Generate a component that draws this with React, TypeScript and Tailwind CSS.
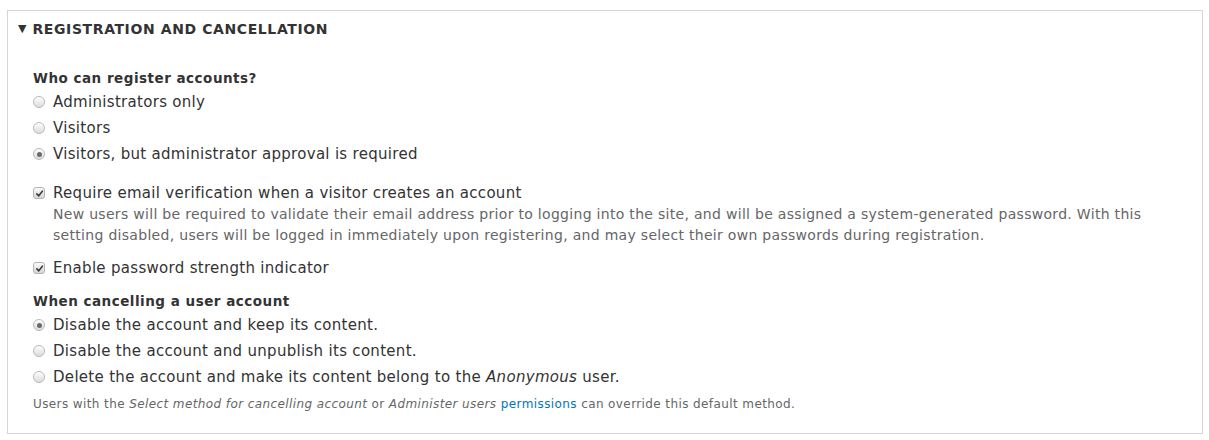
import React from 'react';

function Radio({ checked = false }: { checked?: boolean }) {
  return (
    <span className="flex h-[12px] w-[12px] shrink-0 items-center justify-center rounded-full border border-[#b9b9b9] bg-gradient-to-b from-[#fdfdfd] to-[#dcdcdc] shadow-[inset_0_1px_1px_rgba(255,255,255,0.8)]">
      {checked && <span className="h-[5px] w-[5px] rounded-full bg-[#6a6a6a]" />}
    </span>
  );
}

function Checkbox() {
  return (
    <span className="flex h-[12px] w-[12px] shrink-0 items-center justify-center rounded-[3px] border border-[#b3b3b3] bg-gradient-to-b from-[#fafafa] to-[#d6d6d6]">
      <svg width="9" height="9" viewBox="0 0 10 10">
        <path d="M2 5.4 L4.2 7.6 L8.2 2.4" fill="none" stroke="#3a3a3a" strokeWidth="1.7" strokeLinecap="round" strokeLinejoin="round" />
      </svg>
    </span>
  );
}

function Option({ children, kind, checked }: { children: React.ReactNode; kind: 'radio' | 'check'; checked?: boolean }) {
  return (
    <div className="flex h-[26px] items-center gap-[8px] text-[15px] tracking-[0.3px] text-[#333]">
      {kind === 'radio' ? <Radio checked={checked} /> : <Checkbox />}
      <span>{children}</span>
    </div>
  );
}

export default function App() {
  return (
    <div className="h-[440px] w-[1209px] bg-white pl-[7px] pt-[10px] font-['DejaVu_Sans',sans-serif]">
      <div className="h-[424px] w-[1196px] border border-[#d6d6d6]">
        <div className="flex h-[36px] items-center pl-[10px] font-bold text-[#333]">
          <span className="mr-[6px] text-[11px]">▼</span>
          <span className="text-[14px] tracking-[0.6px]">REGISTRATION AND CANCELLATION</span>
        </div>
        <div className="pl-[25px]">
          <div className="mt-[20px] flex h-[22px] items-center text-[13.5px] font-bold tracking-[0.5px] text-[#333]">Who can register accounts?</div>
          <Option kind="radio">Administrators only</Option>
          <Option kind="radio">Visitors</Option>
          <Option kind="radio" checked>Visitors, but administrator approval is required</Option>

          <div className="mt-[13px]">
            <Option kind="check">Require email verification when a visitor creates an account</Option>
          </div>
          <p className="-mt-[2px] pl-[20px] text-[14px] leading-[21px] tracking-[0.3px] text-[#666]">
            New users will be required to validate their email address prior to logging into the site, and will be assigned a system-generated password. With this
            <br />
            setting disabled, users will be logged in immediately upon registering, and may select their own passwords during registration.
          </p>

          <div className="mt-[9px]">
            <Option kind="check">Enable password strength indicator</Option>
          </div>

          <div className="mt-[9px] flex h-[22px] items-center text-[13.5px] font-bold tracking-[0.5px] text-[#333]">When cancelling a user account</div>
          <Option kind="radio" checked>Disable the account and keep its content.</Option>
          <Option kind="radio">Disable the account and unpublish its content.</Option>
          <Option kind="radio">
            Delete the account and make its content belong to the <em>Anonymous</em> user.
          </Option>
          <div className="mt-[4px] flex h-[20px] items-center text-[12px] tracking-[0.4px] text-[#666]">
            <span>
              Users with the <em>Select method for cancelling account</em> or <em>Administer users</em>{' '}
              <a href="#" className="text-[#0074bd]">permissions</a> can override this default method.
            </span>
          </div>
        </div>
      </div>
    </div>
  );
}
